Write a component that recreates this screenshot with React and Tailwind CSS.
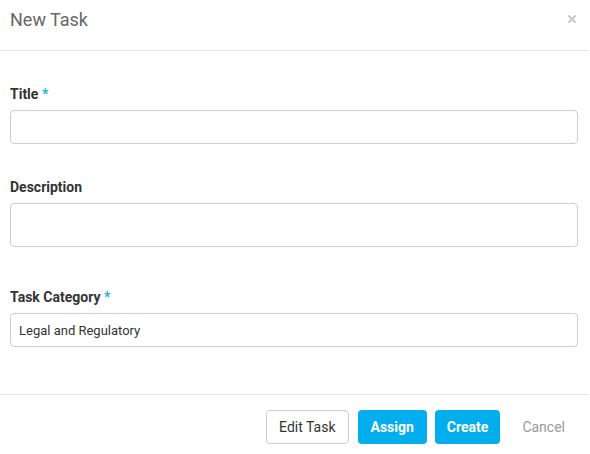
import { X } from 'lucide-react'

const lbl = 'block text-[14px] font-bold text-[#333] leading-[20px]'
const inp = 'block w-full border border-[#ccc] rounded-[4px] px-[8px] text-[13px] text-[#333] bg-white focus:outline-none'
const btn = 'h-[34px] rounded-[4px] text-[14px]'

export default function App() {
  return (
    <div className="w-[588px] bg-white font-['Roboto',sans-serif]">
      <div className="h-[51px] border-b border-[#e5e5e5] flex items-start justify-between px-[10px] pt-[8px]">
        <h4 className="text-[18px] text-[#666] leading-[24px]">New Task</h4>
        <button className="mt-[5px] text-[#c8c8c8]">
          <X size={12} strokeWidth={4} />
        </button>
      </div>

      <div className="px-[10px] pt-[33px] pb-[47px]">
        <label className={lbl}>Title <span className="text-[#1ab0e0]">*</span></label>
        <input className={inp + ' h-[34px] mt-[6px]'} />

        <label className={lbl + ' mt-[33px]'}>Description</label>
        <textarea rows={1} className={inp + ' h-[44px] mt-[6px] resize-none'} />

        <label className={lbl + ' mt-[40px]'}>Task Category <span className="text-[#1ab0e0]">*</span></label>
        <input className={inp + ' h-[34px] mt-[6px]'} defaultValue="Legal and Regulatory" />
      </div>

      <div className="border-t border-[#e5e5e5] h-[60px] flex items-start justify-end pt-[15px] pr-[11px]">
        <button className={btn + ' px-[12px] border border-[#ccc] text-[#333] bg-white'}>Edit Task</button>
        <button className={btn + ' ml-[9px] px-[13px] bg-[#03aeef] text-white font-bold'}>Assign</button>
        <button className={btn + ' ml-[8px] px-[12px] bg-[#03aeef] text-white font-bold'}>Create</button>
        <button className={btn + ' ml-[10px] px-[12px] text-[#999]'}>Cancel</button>
      </div>
    </div>
  )
}
